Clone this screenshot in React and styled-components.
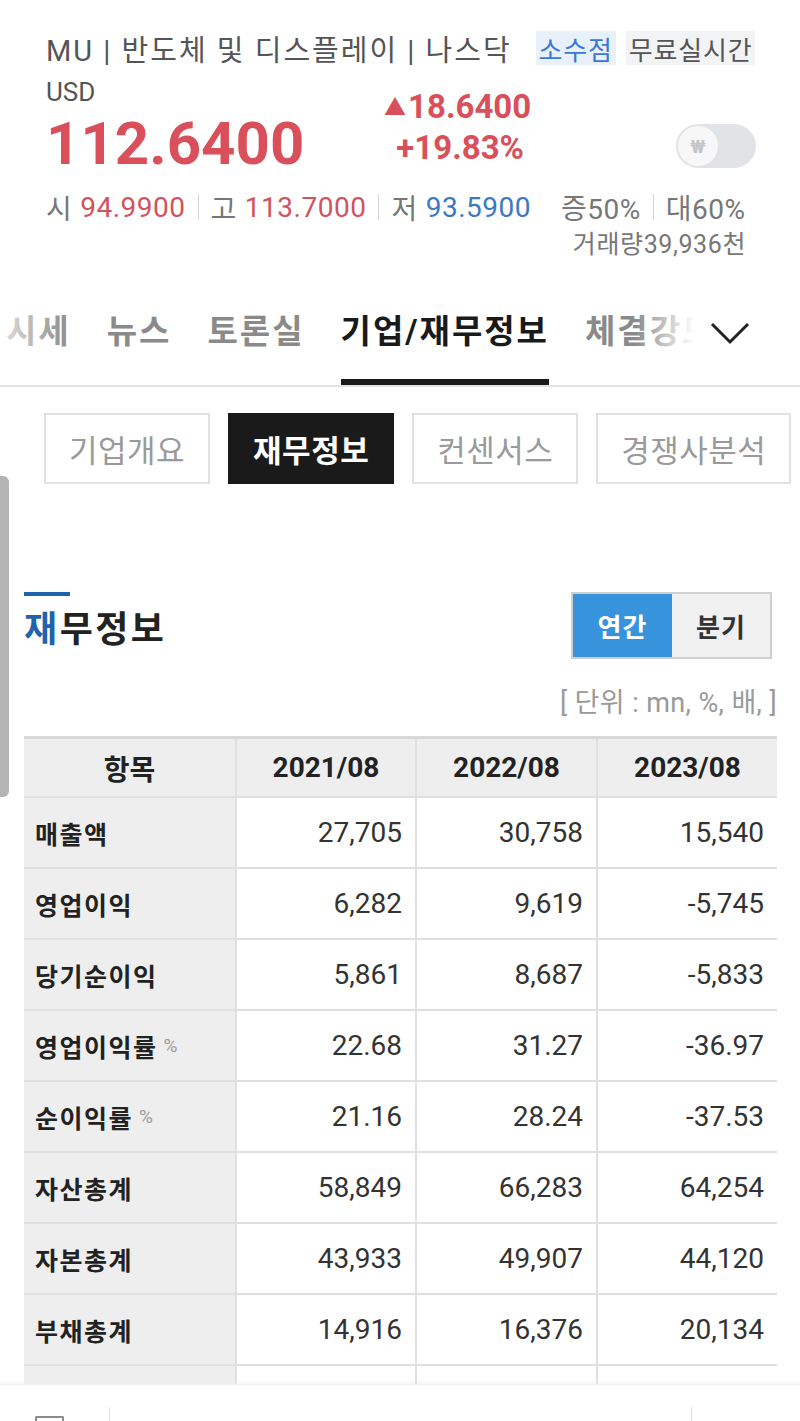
import React from "react";
import styled, { createGlobalStyle, css } from "styled-components";

const GlobalStyle = createGlobalStyle`
  body {
    margin: 0;
    background: #fff;
    font-family: "Roboto", "Noto Sans CJK KR", sans-serif;
  }
  * { box-sizing: border-box; }
`;

const Page = styled.div`
  position: relative;
  width: 800px;
  height: 1421px;
  display: flex;
  flex-direction: column;
  overflow: hidden;
  background: #fff;
`;
const Main = styled.div`
  position: relative;
  flex: 1;
  overflow: hidden;
`;
const ScrollThumb = styled.div`
  position: absolute;
  left: 0;
  top: 476px;
  width: 9px;
  height: 321px;
  background: #b4b4b4;
  border-radius: 0 6px 6px 0;
`;

/* ---------- quote header ---------- */
const Header = styled.div`
  padding: 30px 44px 0 46px;
`;
const TitleRow = styled.div`
  display: flex;
  align-items: center;
  height: 36px;
  font-size: 29px;
  letter-spacing: 2px;
  color: #555;
  white-space: nowrap;
`;
const Name = styled.span`
  margin-right: 24px;
`;
const Badge = styled.span`
  display: inline-flex;
  align-items: center;
  height: 34px;
  padding: 0 3px;
  margin-left: ${(p) => (p.$gap ? "10px" : "0")};
  background: ${(p) => (p.$blue ? "#e8f0fb" : "#f2f3f5")};
  color: ${(p) => (p.$blue ? "#3b77d6" : "#555")};
  font-size: 26px;
  letter-spacing: 0.8px;
`;
const PriceRow = styled.div`
  display: flex;
  margin-top: 11px;
`;
const PriceBlock = styled.div`
  width: 338px;
`;
const Currency = styled.div`
  font-size: 26px;
  line-height: 30px;
  color: #555;
`;
const Price = styled.div`
  margin-top: 5px;
  font-size: 60px;
  line-height: 64px;
  font-weight: 700;
  color: #d9505a;
`;
const Change = styled.div`
  width: 140px;
  margin-top: 10px;
  text-align: right;
  font-size: 33px;
  line-height: 40px;
  font-weight: 700;
  color: #d9505a;
  white-space: nowrap;
`;
const Tri = styled.span`
  font-size: 22px;
  margin-right: 2px;
  vertical-align: 3px;
`;
const Toggle = styled.div`
  margin-left: auto;
  align-self: flex-end;
  margin-bottom: 8px;
  width: 80px;
  height: 44px;
  padding: 2px;
  border-radius: 22px;
  background: #e1e3e6;
`;
const Knob = styled.div`
  width: 40px;
  height: 40px;
  border-radius: 50%;
  background: #f7f7f8;
  display: flex;
  align-items: center;
  justify-content: center;
  color: #c3c5c8;
  font-size: 19px;
  font-weight: 700;
`;
const StatRow = styled.div`
  display: flex;
  align-items: center;
  margin-top: 13px;
  height: 36px;
  font-size: 28px;
  letter-spacing: 0.5px;
  color: #777;
  white-space: nowrap;
`;
const Val = styled.span`
  margin-left: 8px;
  color: ${(p) => (p.$down ? "#3d78c4" : "#d0545e")};
`;
const Sep = styled.span`
  width: 1px;
  height: 26px;
  margin: 0 12px;
  background: #d6d6d6;
`;
const Spacer = styled.span`
  width: 30px;
`;
const Volume = styled.div`
  margin-top: 5px;
  padding-right: 10px;
  text-align: right;
  font-size: 25px;
  letter-spacing: 0.6px;
  line-height: 30px;
  color: #777;
`;

/* ---------- main tabs ---------- */
const TabBar = styled.div`
  display: flex;
  margin-top: 30px;
  border-bottom: 2px solid #e2e2e2;
`;
const TabList = styled.div`
  position: relative;
  flex: 1;
  display: flex;
  gap: 36px;
  padding-left: 6px;
  overflow: hidden;
  white-space: nowrap;
  &::before,
  &::after {
    content: "";
    position: absolute;
    top: 0;
    bottom: 6px;
    width: 70px;
    pointer-events: none;
  }
  &::before {
    left: 0;
    background: linear-gradient(to right, rgba(255,255,255,0.75), rgba(255,255,255,0));
  }
  &::after {
    right: 0;
    background: linear-gradient(to right, rgba(255,255,255,0), #fff 85%);
  }
`;
const Tab = styled.div`
  flex: none;
  padding-top: 22px;
  padding-bottom: 27px;
  font-size: 33px;
  letter-spacing: 2px;
  line-height: 40px;
  font-weight: 700;
  color: #8a8a8a;
  border-bottom: 6px solid transparent;
  ${(p) =>
    p.$active &&
    css`
      color: #1a1a1a;
      border-bottom-color: #1a1a1a;
    `}
`;
const More = styled.div`
  width: 95px;
  display: flex;
  justify-content: flex-start;
  padding-top: 31px;
  padding-left: 5px;
`;

/* ---------- sub tabs ---------- */
const SubTabs = styled.div`
  display: flex;
  gap: 18px;
  margin-top: 26px;
  padding-left: 44px;
`;
const SubTab = styled.div`
  height: 71px;
  padding: 0 23px;
  display: flex;
  align-items: center;
  font-size: 31px;
  letter-spacing: 0.5px;
  white-space: nowrap;
  border: 2px solid ${(p) => (p.$active ? "#1a1a1a" : "#dfe1e3")};
  background: ${(p) => (p.$active ? "#1a1a1a" : "#fff")};
  color: ${(p) => (p.$active ? "#fff" : "#9a9a9a")};
  font-weight: ${(p) => (p.$active ? 700 : 400)};
`;

/* ---------- financial section ---------- */
const Section = styled.div`
  margin-top: 108px;
  padding: 0 23px 0 24px;
`;
const SectionHead = styled.div`
  display: flex;
  justify-content: space-between;
  align-items: flex-start;
`;
const TitleBar = styled.div`
  width: 46px;
  height: 4px;
  background: #1f63ad;
`;
const SectionTitle = styled.h2`
  margin: 10px 0 0;
  font-size: 36px;
  letter-spacing: 2.5px;
  line-height: 48px;
  font-weight: 700;
  color: #222;
  & > em {
    font-style: normal;
    color: #1f63ad;
  }
`;
const Segmented = styled.div`
  display: flex;
  margin-right: 5px;
  border: 2px solid #cfcfcf;
`;
const SegButton = styled.div`
  width: ${(p) => p.$w}px;
  height: 63px;
  display: flex;
  align-items: center;
  justify-content: center;
  font-size: 26px;
  letter-spacing: 1px;
  font-weight: 700;
  background: ${(p) => (p.$active ? "#3794dc" : "#f0f0f0")};
  color: ${(p) => (p.$active ? "#fff" : "#333")};
`;
const Unit = styled.div`
  margin-top: 27px;
  text-align: right;
  font-size: 27px;
  letter-spacing: 0.4px;
  line-height: 34px;
  color: #9a9a9a;
`;
const Table = styled.div`
  margin-top: 16px;
  display: grid;
  grid-template-columns: 211px 180px 181px 181px;
  border-top: 3px solid #d8d8d8;
`;
const HeadCell = styled.div`
  height: 59px;
  display: flex;
  align-items: center;
  justify-content: center;
  background: #eeeeee;
  border-bottom: 2px solid #e0e0e0;
  border-left: ${(p) => (p.$first ? "none" : "2px solid #e0e0e0")};
  font-size: 28px;
  font-weight: 700;
  color: #222;
`;
const LabelCell = styled.div`
  height: 71px;
  display: flex;
  align-items: center;
  padding-left: 11px;
  background: #eeeeee;
  border-bottom: 2px solid #e0e0e0;
  font-size: 25px;
  letter-spacing: 1.5px;
  font-weight: 700;
  color: #222;
  white-space: nowrap;
`;
const Pct = styled.span`
  margin-left: 6px;
  font-size: 19px;
  letter-spacing: 0;
  font-weight: 400;
  color: #9a9a9a;
`;
const ValueCell = styled.div`
  height: 71px;
  display: flex;
  align-items: center;
  justify-content: flex-end;
  padding-right: 13px;
  border-bottom: 2px solid #e0e0e0;
  border-left: 2px solid #e0e0e0;
  font-size: 28px;
  color: #333;
`;

/* ---------- bottom bar ---------- */
const BottomBar = styled.div`
  flex: none;
  height: 37px;
  display: flex;
  background: #fff;
  border-top: 1px solid #f0f0f0;
  box-shadow: 0 -2px 4px rgba(0, 0, 0, 0.04);
`;
const BarSlot = styled.div`
  width: ${(p) => p.$w};
  flex: ${(p) => (p.$w ? "none" : 1)};
  margin-top: 22px;
  border-right: ${(p) => (p.$line ? "1px solid #e2e2e2" : "none")};
  padding-left: 35px;
`;
const BarIcon = styled.div`
  width: 29px;
  height: 14px;
  margin-top: 9px;
  border: 2px solid #8c8c8c;
  border-bottom: none;
  border-radius: 2px 2px 0 0;
`;

const rows = [
  ["매출액", "27,705", "30,758", "15,540"],
  ["영업이익", "6,282", "9,619", "-5,745"],
  ["당기순이익", "5,861", "8,687", "-5,833"],
  ["영업이익률", "22.68", "31.27", "-36.97", true],
  ["순이익률", "21.16", "28.24", "-37.53", true],
  ["자산총계", "58,849", "66,283", "64,254"],
  ["자본총계", "43,933", "49,907", "44,120"],
  ["부채총계", "14,916", "16,376", "20,134"],
];

const Chevron = () => (
  <svg width="40" height="24" viewBox="0 0 40 24">
    <polyline points="2,3 20,21 38,3" fill="none" stroke="#222" strokeWidth="3" />
  </svg>
);

const App = () => {
  return (
    <Page>
      <GlobalStyle />
      <Main>
        <ScrollThumb />
        <Header>
          <TitleRow>
            <Name>MU | 반도체 및 디스플레이 | 나스닥</Name>
            <Badge $blue>소수점</Badge>
            <Badge $gap>무료실시간</Badge>
          </TitleRow>
          <PriceRow>
            <PriceBlock>
              <Currency>USD</Currency>
              <Price>112.6400</Price>
            </PriceBlock>
            <Change>
              <div>
                <Tri>▲</Tri>18.6400
              </div>
              <div>+19.83%</div>
            </Change>
            <Toggle>
              <Knob>₩</Knob>
            </Toggle>
          </PriceRow>
          <StatRow>
            시<Val>94.9900</Val>
            <Sep />
            고<Val>113.7000</Val>
            <Sep />
            저<Val $down>93.5900</Val>
            <Spacer />
            증50%
            <Sep />
            대60%
          </StatRow>
          <Volume>거래량39,936천</Volume>
        </Header>

        <TabBar>
          <TabList>
            <Tab>시세</Tab>
            <Tab>뉴스</Tab>
            <Tab>토론실</Tab>
            <Tab $active>기업/재무정보</Tab>
            <Tab>체결강도</Tab>
          </TabList>
          <More>
            <Chevron />
          </More>
        </TabBar>

        <SubTabs>
          <SubTab>기업개요</SubTab>
          <SubTab $active>재무정보</SubTab>
          <SubTab>컨센서스</SubTab>
          <SubTab>경쟁사분석</SubTab>
        </SubTabs>

        <Section>
          <SectionHead>
            <div>
              <TitleBar />
              <SectionTitle>
                <em>재</em>무정보
              </SectionTitle>
            </div>
            <Segmented>
              <SegButton $active $w={99}>연간</SegButton>
              <SegButton $w={98}>분기</SegButton>
            </Segmented>
          </SectionHead>
          <Unit>[ 단위 : mn, %, 배, ]</Unit>
          <Table>
            <HeadCell $first>항목</HeadCell>
            <HeadCell>2021/08</HeadCell>
            <HeadCell>2022/08</HeadCell>
            <HeadCell>2023/08</HeadCell>
            {rows.map(([label, a, b, c, pct]) => (
              <React.Fragment key={label}>
                <LabelCell>
                  {label}
                  {pct && <Pct>%</Pct>}
                </LabelCell>
                <ValueCell>{a}</ValueCell>
                <ValueCell>{b}</ValueCell>
                <ValueCell>{c}</ValueCell>
              </React.Fragment>
            ))}
            {/* next row, only its top edge is visible above the bottom bar */}
            <LabelCell />
            <ValueCell />
            <ValueCell />
            <ValueCell />
          </Table>
        </Section>
      </Main>
      <BottomBar>
        <BarSlot $w="110px" $line>
          <BarIcon />
        </BarSlot>
        <BarSlot $w="582px" $line />
        <BarSlot />
      </BottomBar>
    </Page>
  );
};

export default App;
